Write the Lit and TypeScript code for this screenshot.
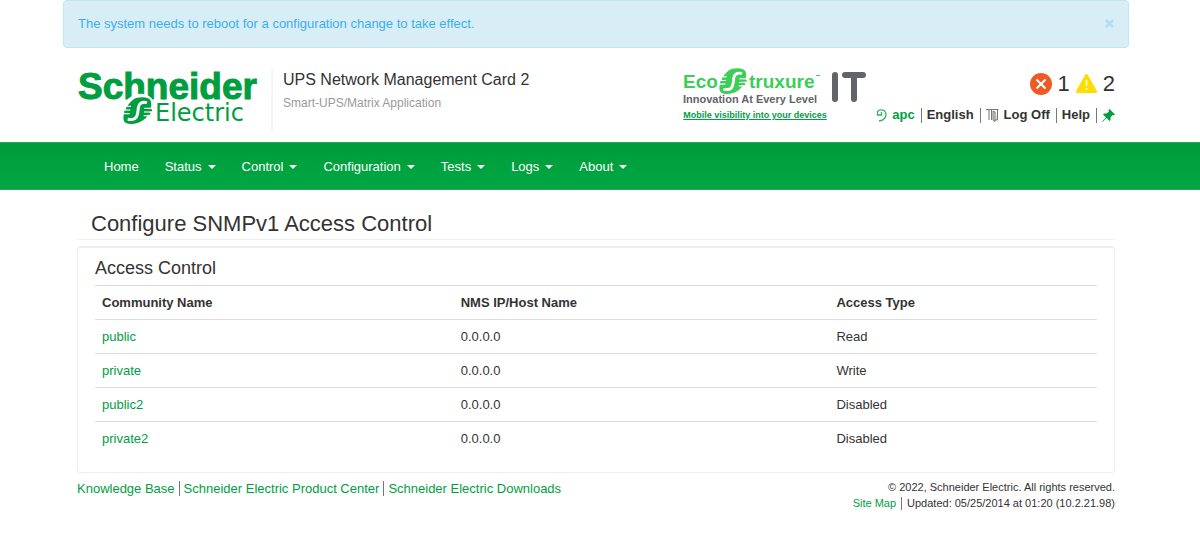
import { LitElement, html, svg, css } from "lit";
import { customElement, property } from "lit/decorators.js";

/* The rounded Schneider "S" emblem, shared by both brand marks. */
const emblem = svg`
  <path fill="currentColor" d="M30 8C45 -2 80 -2 84 14C88 32 78 58 60 70C45 82 8 88 2 70C-2 50 12 22 30 8Z"/>
  <path stroke="#fff" stroke-width="4" fill="none" d="M4 28H24M0 39H22M0 50H20M64 34H90M63 45H90M62 56H80"/>
  <path stroke="currentColor" stroke-width="6" fill="none" d="M10 33.500H34M4 44.500H34M60 39.500H87M60 50.500H82"/>
  <path stroke="#fff" stroke-width="9" fill="none" d="M72 17C56 13 47 20 46 32C45 44 45 50 41 58C37 67 28 69 14 67"/>`;

@customElement("brand-logo")
export class BrandLogo extends LitElement {
  static styles = css`
    :host { display: block; }
    svg { display: block; overflow: visible; color: #009e3f; }
    .name { font: bold 37px "Liberation Sans", Arial, sans-serif; fill: currentColor; stroke: currentColor; }
    .sub { font: 24px "DejaVu Sans", Verdana, sans-serif; fill: currentColor; }
  `;
  render() {
    return html`<svg width="182" height="64" viewBox="0 0 182 64" role="img" aria-label="Schneider Electric">
      <text class="name" x="1" y="35">Schneider</text>
      <ellipse cx="61" cy="46" rx="18" ry="15" fill="#fff" transform="rotate(-40 61 46)"/>
      <g transform="translate(46 33) scale(.333)">${emblem}</g>
      <text class="sub" x="78" y="57">Electric</text>
    </svg>`;
  }
}

@customElement("eco-logo")
export class EcoLogo extends LitElement {
  static styles = css`
    :host { display: block; }
    svg { display: block; overflow: visible; color: #3dcd58; }
    .eco { font: bold 19px "Liberation Sans", Arial, sans-serif; fill: currentColor; }
    .tag { font: bold 11px "Liberation Sans", Arial, sans-serif; fill: #626469; }
  `;
  render() {
    return html`<svg width="184" height="42" viewBox="0 0 184 42" role="img" aria-label="EcoStruxure IT, Innovation At Every Level">
      <text class="eco" x="0" y="21">Eco</text>
      <g transform="translate(36 1) scale(.32)">${emblem}</g>
      <text class="eco" x="66" y="21">truxure</text>
      <path d="M133 8.500H137" stroke="currentColor"/>
      <text class="tag" x="0" y="36">Innovation At Every Level</text>
      <path d="M152 8V32M162 8H180M171 8V32" stroke="#626469" stroke-width="6" stroke-linecap="round" fill="none"/>
    </svg>`;
  }
}

@customElement("app-root")
export class AppRoot extends LitElement {
  @property({ attribute: false }) menu = ["Home", "Status", "Control", "Configuration", "Tests", "Logs", "About"];
  @property({ attribute: false }) rows = [
    ["public", "0.0.0.0", "Read"],
    ["private", "0.0.0.0", "Write"],
    ["public2", "0.0.0.0", "Disabled"],
    ["private2", "0.0.0.0", "Disabled"],
  ];

  static styles = css`
    :host { display: block; font: 13px/18px "Liberation Sans", Arial, sans-serif; color: #333; background: #fff; }
    * { box-sizing: border-box; }
    a { color: #009e3f; text-decoration: none; }
    h1, h2, h3, p { margin: 0; font-weight: normal; }
    .wrap { max-width: 1074px; margin: 0 auto; padding-right: 8px; }
    .inner { padding: 0 14px; }
    .alert { display: flex; justify-content: space-between; align-items: center; height: 48px; padding: 0 14px;
      background: #d9edf7; border: 1px solid #bce8f1; border-radius: 4px; color: #3ab0ea; }
    .close { display: flex; border: 0; padding: 0; background: none; color: #b1def5; }
    header { display: flex; align-items: flex-end; padding: 16px 14px 11px; }
    header > * { height: 64px; }
    brand-logo { height: 67px; }
    .product { border-left: 2px solid #f5f5f5; margin-left: 12px; padding: 3px 0 0 10px; flex: 1; }
    .product h1 { font-size: 16px; line-height: 20px; }
    .product p { font-size: 12px; line-height: 16px; margin-top: 5px; color: #999; }
    .eco { width: 184px; margin-right: 9px; }
    .eco a { display: block; font-size: 9px; line-height: 12px; font-weight: bold; text-decoration: underline; }
    .tools { display: flex; flex-direction: column; align-items: flex-end; }
    .alarms { display: flex; align-items: center; gap: 6px; height: 36px; padding-bottom: 2px; font-size: 22px; line-height: 26px; }
    .user { display: flex; align-items: center; gap: 5px; height: 24px; font-weight: bold; }
    .user a { color: #333; }
    .user .name { color: #009e3f; }
    .bar { width: 1px; height: 15px; background: #777; }
    .user .bar { margin-left: 1px; }
    nav { background: linear-gradient(#009b3a, #00a843); border: solid #2aa758; border-width: 1px 0; height: 48px; }
    .menu { display: flex; flex-wrap: wrap; padding: 0 28px; }
    .menu button { display: flex; align-items: center; gap: 6px; height: 47px; border: 0; padding: 0 13px; background: none; color: #fff; font: inherit; }
    .caret { border: 4px solid transparent; border-top-color: #fff; border-bottom: 0; }
    .title { font-size: 22px; line-height: 28px; padding: 20px 14px 1px; border-bottom: 1px solid #eee; }
    .panel { margin-top: 6px; border: 1px solid #eee; border-top-width: 2px; border-radius: 4px; padding: 8px 17px 17px; }
    .panel h3 { font-size: 18px; line-height: 24px; padding-bottom: 5px; }
    table { width: 100%; border-collapse: collapse; table-layout: fixed; }
    th, td { text-align: left; padding: 8px 7px; line-height: 17px; border-top: 1px solid #ddd; }
    .c1 { width: 35.8%; }
    .c2 { width: 37.5%; }
    footer { display: flex; justify-content: space-between; padding: 6px 14px 0; }
    .links { display: flex; align-items: flex-start; gap: 4px; line-height: 20px; }
    .links .bar { margin-top: 2px; }
    .legal { text-align: right; font-size: 11px; line-height: 16px; }
    .updated { display: flex; justify-content: flex-end; align-items: center; gap: 5px; }
    .updated .bar { height: 13px; }
  `;

  render() {
    return html`
      <div class="wrap">
        <div class="alert" role="alert">
          <span>The system needs to reboot for a configuration change to take effect.</span>
          <button class="close" aria-label="Close"><svg width="9" height="10" viewBox="0 0 9 10"><path d="M1 1L8 8M8 1L1 8" stroke="currentColor" stroke-width="2.500"/></svg></button>
        </div>
        <header>
          <brand-logo></brand-logo>
          <div class="product"><h1>UPS Network Management Card 2</h1><p>Smart-UPS/Matrix Application</p></div>
          <div class="eco"><eco-logo></eco-logo><a href="#">Mobile visibility into your devices</a></div>
          <div class="tools">
            <div class="alarms">
              <svg width="22" height="22" viewBox="0 0 22 22"><circle cx="11" cy="11" r="11" fill="#ee5a24"/><path d="M6.500 6.500l9 9m0-9l-9 9" stroke="#fff" stroke-width="2"/></svg>
              <span>1</span>
              <svg width="21" height="20" viewBox="0 0 21 20"><path d="M10.500 1.500L19.500 17.500H1.500Z" fill="#fd0" stroke="#fd0" stroke-width="3" stroke-linejoin="round"/><path d="M10.500 6v6M10.500 14v2" stroke="#fff" stroke-width="1.500"/></svg>
              <span>2</span>
            </div>
            <div class="user">
              <svg width="11" height="13" viewBox="0 0 11 13"><path d="M5.500 3V6H1.500V2.500C3 .5 8 0 9.500 3.500C11 8 8 11.500 3 12" fill="none" stroke="#36b069" stroke-width="1.300"/></svg>
              <a class="name" href="#">apc</a><span class="bar"></span>
              <a href="#">English</a><span class="bar"></span>
              <svg width="13" height="13" viewBox="0 0 13 13"><path d="M0 .5H12.500M3 1V11M5.500 1V11M11.500 1V11H9M7 2L9 3V12.500L7 11Z" fill="#ddd" stroke="#777" stroke-width="1"/></svg>
              <a href="#">Log Off</a><span class="bar"></span>
              <a href="#">Help</a><span class="bar"></span>
              <svg width="13" height="13" viewBox="0 0 13 13"><path d="M7.500 0L13 5.500L11.500 6.500L10.500 6L8.500 8.500V11L7.500 12L4.500 9L1 12.500L0 13L.5 12L4 8.500L1 5.500L2 4.500H4.500L7 2.500L6.500 1.500Z" fill="#009e3f"/></svg>
            </div>
          </div>
        </header>
      </div>
      <nav><div class="wrap"><div class="menu">
        ${this.menu.map((m, i) => html`<button>${m}${i ? html`<span class="caret"></span>` : ""}</button>`)}
      </div></div></nav>
      <div class="wrap">
        <main class="inner">
          <h2 class="title">Configure SNMPv1 Access Control</h2>
          <section class="panel">
            <h3>Access Control</h3>
            <table>
              <thead><tr><th class="c1">Community Name</th><th class="c2">NMS IP/Host Name</th><th>Access Type</th></tr></thead>
              <tbody>${this.rows.map((r) => html`<tr><td><a href="#">${r[0]}</a></td><td>${r[1]}</td><td>${r[2]}</td></tr>`)}</tbody>
            </table>
          </section>
        </main>
        <footer>
          <div class="links"><a href="#">Knowledge Base</a><span class="bar"></span><a href="#">Schneider Electric Product Center</a><span class="bar"></span><a href="#">Schneider Electric Downloads</a></div>
          <div class="legal"><div>© 2022, Schneider Electric. All rights reserved.</div>
            <div class="updated"><a href="#">Site Map</a><span class="bar"></span><span>Updated: 05/25/2014 at 01:20 (10.2.21.98)</span></div></div>
        </footer>
      </div>`;
  }
}
